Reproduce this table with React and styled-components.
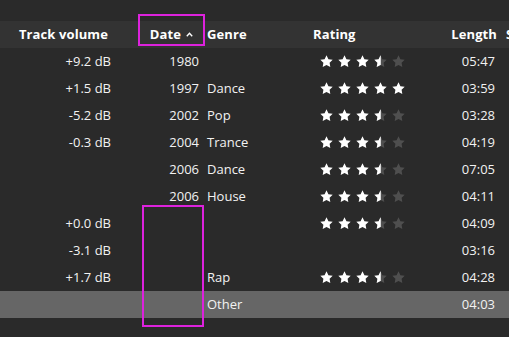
import styled, { createGlobalStyle } from "styled-components";

const GlobalStyle = createGlobalStyle`
	html, body {
		margin: 0;
		padding: 0;
		background: #2a2a2a;
		overflow: hidden;
	}
	body {
		font-family: "Open Sans", "Liberation Sans", sans-serif;
		font-size: 13px;
		color: #f2f2f2;
	}
`;

const tracks = [
	{ volume: "+9.2 dB", date: "1980", genre: "", rating: 3.5, length: "05:47" },
	{ volume: "+1.5 dB", date: "1997", genre: "Dance", rating: 5, length: "03:59" },
	{ volume: "-5.2 dB", date: "2002", genre: "Pop", rating: 3.5, length: "03:28" },
	{ volume: "-0.3 dB", date: "2004", genre: "Trance", rating: 3.5, length: "04:19" },
	{ volume: "", date: "2006", genre: "Dance", rating: 3.5, length: "07:05" },
	{ volume: "", date: "2006", genre: "House", rating: 3.5, length: "04:11" },
	{ volume: "+0.0 dB", date: "", genre: "", rating: 3.5, length: "04:09" },
	{ volume: "-3.1 dB", date: "", genre: "", rating: 0, length: "03:16" },
	{ volume: "+1.7 dB", date: "", genre: "Rap", rating: 3.5, length: "04:28" },
	{ volume: "", date: "", genre: "Other", rating: 0, length: "04:03", selected: true },
];

// five-point star, outer radius 12, inner radius 6
const STAR =
	"M12 0.5L15.53 7.65 23.41 8.79 17.71 14.35 19.05 22.21 12 18.5 4.95 22.21 6.29 14.35 0.59 8.79 8.47 7.65Z";

const Star = ({ fill }) => (
	<svg width="13" height="13" viewBox="0 0 24 24">
		<defs>
			<clipPath id="half-left">
				<rect x="0" y="0" width="12.5" height="24" />
			</clipPath>
		</defs>
		<path d={STAR} fill={fill === "full" ? "#ffffff" : "#4f4f4f"} />
		{fill === "half" && <path d={STAR} fill="#ffffff" clipPath="url(#half-left)" />}
	</svg>
);

const Stars = ({ value }) => {
	if (!value) return null;
	return (
		<StarRow>
			{[1, 2, 3, 4, 5].map((i) => (
				<Star
					key={i}
					fill={value >= i ? "full" : value >= i - 0.5 ? "half" : "empty"}
				/>
			))}
		</StarRow>
	);
};

const Caret = () => (
	<svg width="7" height="5" viewBox="0 0 7 5">
		<path d="M0.8 4.2L3.5 1.3 6.2 4.2" fill="none" stroke="#ffffff" strokeWidth="1.4" />
	</svg>
);

const App = () => {
	return (
		<Page>
			<GlobalStyle />
			<Table>
				<HeaderRow>
					<HeadCell align="right" pad="0 8px 0 0">Track volume</HeadCell>
					<HeadCell align="right" pad="0 11px 0 0">
						Date
						<CaretBox>
							<Caret />
						</CaretBox>
					</HeadCell>
					<HeadCell pad="0 0 0 3px">Genre</HeadCell>
					<HeadCell pad="0 0 0 3px">Rating</HeadCell>
					<HeadCell align="right" pad="0 3px 0 0">Length</HeadCell>
					<HeadCell pad="0 0 0 6px">Source</HeadCell>
				</HeaderRow>
				{tracks.map((t, i) => (
					<Row key={i} selected={t.selected}>
						<Cell align="right" pad="0 5px 0 0">{t.volume}</Cell>
						<Cell align="right" pad="0 5px 0 0">{t.date}</Cell>
						<Cell pad="0 0 0 3px">{t.genre}</Cell>
						<Cell pad="0 0 0 10px">
							<Stars value={t.rating} />
						</Cell>
						<Cell align="right" pad="0 5px 0 0">{t.length}</Cell>
						<Cell />
					</Row>
				))}
			</Table>
			<Marker style={{ left: 138, top: 14, width: 63, height: 28 }} />
			<Marker style={{ left: 142, top: 205, width: 58, height: 118 }} />
		</Page>
	);
};

export default App;

const Page = styled.div`
	position: relative;
	width: 509px;
	height: 337px;
	padding-top: 21px;
	box-sizing: border-box;
	overflow: hidden;
`;

const Table = styled.div`
	display: flex;
	flex-direction: column;
	width: 560px;
`;

const columns = "116px 88px 106px 105px 85px 1fr";

const HeaderRow = styled.div`
	display: grid;
	grid-template-columns: ${columns};
	height: 27px;
	background: #333333;
	font-weight: 700;
	color: #ffffff;
`;

const Row = styled.div`
	display: grid;
	grid-template-columns: ${columns};
	height: 27px;
	background: ${(p) => (p.selected ? "#666666" : "transparent")};
`;

const Cell = styled.div`
	display: flex;
	align-items: center;
	justify-content: ${(p) => (p.align === "right" ? "flex-end" : "flex-start")};
	padding: ${(p) => p.pad || "0"};
	white-space: nowrap;
	overflow: hidden;
	line-height: 27px;
`;

const HeadCell = styled(Cell)`
	letter-spacing: 0.1px;
`;

const CaretBox = styled.span`
	display: inline-flex;
	margin-left: 5px;
	margin-top: -1px;
`;

const StarRow = styled.div`
	display: flex;
	gap: 5px;
	align-items: center;
`;

const Marker = styled.div`
	position: absolute;
	border: 2px solid #dd22dd;
	pointer-events: none;
`;
